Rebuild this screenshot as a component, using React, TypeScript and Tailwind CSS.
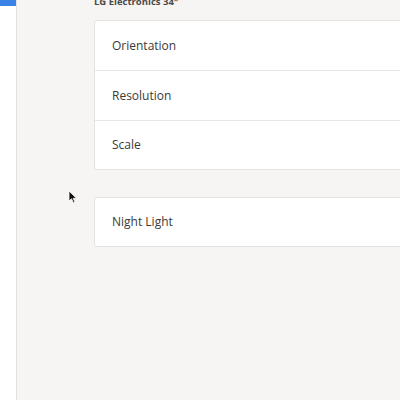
import React from 'react'

const rows = ['Orientation', 'Resolution', 'Scale']

const Row = ({ label, last }: { label: string; last?: boolean }) => (
  <div
    className={`flex items-center pl-[17px] ${last ? 'h-[48px]' : 'h-[50px] border-b border-[#e8e7e6]'}`}
  >
    <span className="text-[12px] text-[#3a3a3a]">{label}</span>
  </div>
)

const Pointer = () => (
  <svg
    className="absolute left-[68px] top-[190px]"
    width="10"
    height="14"
    viewBox="0 0 10 14"
  >
    <path d="M1 1 L1 11 L3.5 8.8 L5.5 13 L7 12.3 L5.2 8.3 L8.5 8.3 Z" fill="#111" stroke="#fff" strokeWidth="0.8" />
  </svg>
)

export default function App() {
  return (
    <div
      className="relative flex h-[400px] w-[400px] overflow-hidden"
      style={{ fontFamily: '"Open Sans", "Noto Sans", sans-serif' }}
    >
      {/* sidebar */}
      <div className="w-[17px] shrink-0 bg-white border-r border-[#e2e1df]">
        <div className="h-[6px] bg-[#3a82e6]" />
      </div>

      {/* display panel */}
      <div className="flex-1 bg-[#f6f5f4] pl-[77px]">
        <div className="-mt-[5px] mb-[11px] h-[14px] text-[9.5px] font-bold leading-[14px] text-[#4a4a4a] whitespace-nowrap">
          LG Electronics 34"
        </div>
        <div className="w-[400px] bg-white border border-[#e3e2e0] rounded-l-[3px]">
          {rows.map((r, i) => (
            <Row key={r} label={r} last={i === rows.length - 1} />
          ))}
        </div>
        <div className="mt-[27px] w-[400px] bg-white border border-[#e3e2e0] rounded-l-[3px]">
          <Row label="Night Light" last />
        </div>
      </div>

      <Pointer />
    </div>
  )
}
